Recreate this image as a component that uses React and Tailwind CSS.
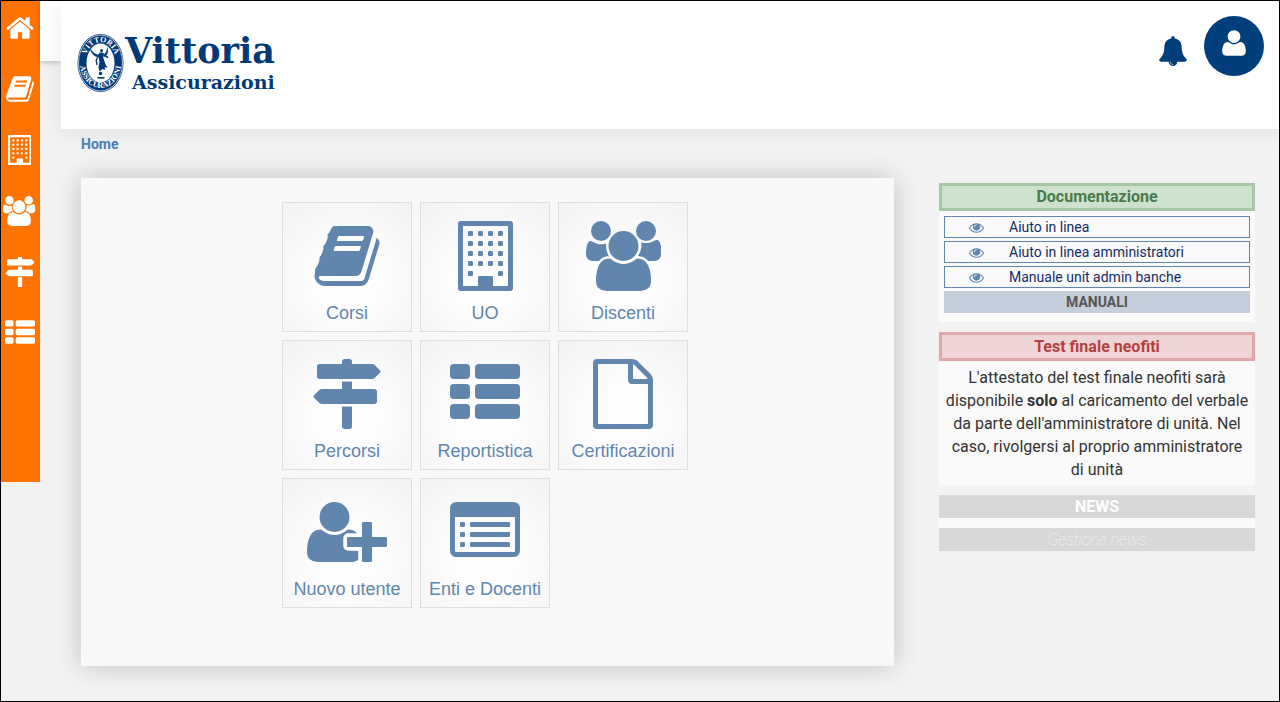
const ICONS = {
  home: {
    width: 1792,
    d: "M1472 992v480q0 26-19 45t-45 19h-384v-384h-256v384h-384q-26 0-45-19t-19-45v-480q0-1 .5-3t.5-3l575-474 575 474q1 2 1 6zm223-69l-62 74q-8 9-21 11h-3q-13 0-21-7l-692-577-692 577q-12 8-24 7-13-2-21-11l-62-74q-8-10-7-23.5t11-21.5l719-599q32-26 76-26t76 26l244 204v-195q0-14 9-23t23-9h192q14 0 23 9t9 23v408l219 182q10 8 11 21.5t-7 23.5z",
  },
  book: {
    width: 1792,
    d: "M1703 478q40 57 18 129l-275 906q-19 64-76.5 107.5t-122.5 43.5h-923q-77 0-148.5-53.5t-99.5-131.5q-24-67-2-127 0-4 3-27t4-37q1-8-3-21.5t-3-19.5q2-11 8-21t16.5-23.5 16.5-23.5q23-38 45-91.5t30-91.5q3-10 .5-30t-.5-28q3-11 17-28t17-23q21-36 42-92t25-90q1-9-2.5-32t.5-28q4-13 22-30.5t22-22.5q19-26 42.5-84.5t27.5-96.5q1-8-3-25.5t-2-26.5q2-8 9-18t18-23 17-21q8-12 16.5-30.5t15-35 16-36 19.5-32 26.5-23.5 36-11.5 47.5 5.5l-1 3q38-9 51-9h761q74 0 114 56t18 130l-274 906q-36 119-71.5 153.5t-128.5 34.5h-869q-27 0-38 15-11 16-1 43 24 70 144 70h923q29 0 56-15.5t35-41.5l300-987q7-22 5-57 38 15 59 43zm-1064 2q-4 13 2 22.5t20 9.5h608q13 0 25.5-9.5t16.5-22.5l21-64q4-13-2-22.5t-20-9.5h-608q-13 0-25.5 9.5t-16.5 22.5zm-83 256q-4 13 2 22.5t20 9.5h608q13 0 25.5-9.5t16.5-22.5l21-64q4-13-2-22.5t-20-9.5h-608q-13 0-25.5 9.5t-16.5 22.5z",
  },
  users: {
    width: 1920,
    d: "M593 896q-162 5-265 128h-134q-82 0-138-40.5t-56-118.5q0-353 124-353 6 0 43.5 21t97.5 42.5 119 21.5q67 0 133-23-5 37-5 66 0 159 93 287zm1071 637q0 120-73 189.5t-194 69.5h-874q-121 0-194-69.5t-73-189.5q0-53 3.5-103.5t14-109 26.5-108.5 43-97.5 62-81 85.5-53.5 111.5-20q10 0 43 21.5t73 48 107 48 135 21.5 135-21.5 107-48 73-48 43-21.5q61 0 111.5 20t85.5 53.5 62 81 43 97.5 26.5 108.5 14 109 3.5 103.5zm-1024-1277q0 106-75 181t-181 75-181-75-75-181 75-181 181-75 181 75 75 181zm704 384q0 159-112.5 271.5t-271.5 112.5-271.5-112.5-112.5-271.5 112.5-271.5 271.5-112.5 271.5 112.5 112.5 271.5zm576 225q0 78-56 118.5t-138 40.5h-134q-103-123-265-128 93-128 93-287 0-29-5-66 66 23 133 23 59 0 119-21.5t97.5-42.5 43.5-21q124 0 124 353zm-128-609q0 106-75 181t-181 75-181-75-75-181 75-181 181-75 181 75 75 181z",
  },
  signs: {
    width: 1792,
    d: "M1745 297q10 10 10 23t-10 23l-141 141q-28 28-68 28h-1344q-26 0-45-19t-19-45v-256q0-26 19-45t45-19h576v-64q0-26 19-45t45-19h128q26 0 45 19t19 45v64h512q40 0 68 28zm-977 919h256v512q0 26-19 45t-45 19h-128q-26 0-45-19t-19-45v-512zm832-448q26 0 45 19t19 45v256q0 26-19 45t-45 19h-1344q-40 0-68-28l-141-141q-10-10-10-23t10-23l141-141q28-28 68-28h512v-192h256v192h576z",
  },
  file: {
    width: 1536,
    d: "M1468 380q28 28 48 76t20 88v1152q0 40-28 68t-68 28h-1344q-40 0-68-28t-28-68v-1600q0-40 28-68t68-28h896q40 0 88 20t76 48zm-444-244v376h376q-10-29-22-41l-313-313q-12-12-41-22zm384 1528v-1024h-416q-40 0-68-28t-28-68v-416h-768v1536h1280z",
  },
  userPlus: {
    width: 2048,
    d: "M704 896q-159 0-271.5-112.5t-112.5-271.5 112.5-271.5 271.5-112.5 271.5 112.5 112.5 271.5-112.5 271.5-271.5 112.5zm960 128h352q13 0 22.5 9.5t9.5 22.5v192q0 13-9.5 22.5t-22.5 9.5h-352v352q0 13-9.5 22.5t-22.5 9.5h-192q-13 0-22.5-9.5t-9.5-22.5v-352h-352q-13 0-22.5-9.5t-9.5-22.5v-192q0-13 9.5-22.5t22.5-9.5h352v-352q0-13 9.5-22.5t22.5-9.5h192q13 0 22.5 9.5t9.5 22.5v352zm-736 224q0 52 38 90t90 38h256v238q-68 50-171 50h-874q-121 0-194-69t-73-190q0-53 3.5-103.5t14-109 26.5-108.5 43-97.5 62-81 85.5-53.5 111.5-20q19 0 39 17 79 61 154.5 91.5t164.5 30.5 164.5-30.5 154.5-91.5q20-17 39-17 132 0 217 96h-223q-52 0-90 38t-38 90v192z",
  },
  bell: {
    width: 1792,
    d: "M912 1696q0-16-16-16-59 0-101.5-42.5t-42.5-101.5q0-16-16-16t-16 16q0 73 51.5 124.5t124.5 51.5q16 0 16-16zm816-288q0 52-38 90t-90 38h-448q0 106-75 181t-181 75-181-75-75-181h-448q-52 0-90-38t-38-90q50-42 91-88t85-119.5 74.5-158.5 50-206 19.5-260q0-152 117-282.5t307-158.5q-8-19-8-39 0-40 28-68t68-28 68 28 28 68q0 20-8 39 190 28 307 158.5t117 282.5q0 139 19.5 260t50 206 74.5 158.5 85 119.5 91 88z",
  },
  user: {
    width: 1792,
    d: "M1600 1405q0 120-73 189.5t-194 69.5h-874q-121 0-194-69.5t-73-189.5q0-53 3.5-103.5t14-109 26.5-108.5 43-97.5 62-81 85.5-53.5 111.5-20q9 0 42 21.5t74.5 48 108 48 133.5 21.5 133.5-21.5 108-48 74.5-48 42-21.5q61 0 111.5 20t85.5 53.5 62 81 43 97.5 26.5 108.5 14 109 3.5 103.5zm-320-893q0 159-112.5 271.5t-271.5 112.5-271.5-112.5-112.5-271.5 112.5-271.5 271.5-112.5 271.5 112.5 112.5 271.5z",
  },
  eye: {
    width: 1792,
    d: "M1664 960q-152-236-381-353 61 104 61 225 0 185-131.5 316.5t-316.5 131.5-316.5-131.5-131.5-316.5q0-121 61-225-229 117-381 353 133 205 333.5 326.5t434.5 121.5 434.5-121.5 333.5-326.5zm-720-384q0-20-14-34t-34-14q-125 0-214.5 89.5t-89.5 214.5q0 20 14 34t34 14 34-14 14-34q0-86 61-147t147-61q20 0 34-14t14-34zm848 384q0 34-20 69-140 230-376.5 368.5t-499.5 138.5-499.5-139-376.5-368q-20-35-20-69t20-69q140-229 376.5-368t499.5-139 499.5 139 376.5 368q20 35 20 69z",
  },
};

const buildingWindows = [256, 512, 768, 1024, 1280].flatMap((y) =>
  [256, 512, 768, 1024]
    .filter((x) => y < 1280 || x === 256 || x === 1024)
    .map((x) => ({ x, y })),
);

function Icon({ name, className }) {
  if (name === "building") {
    return (
      <svg viewBox="0 0 1408 1792" fill="currentColor" className={className} aria-hidden="true">
        <path
          fillRule="evenodd"
          d="M64 0h1280q26 0 45 19t19 45v1664q0 26-19 45t-45 19H64q-26 0-45-19t-19-45V64q0-26 19-45T64 0zM128 128v1536h384v-224q0-13 9.500-22.500t22.500-9.500h320q13 0 22.500 9.500t9.500 22.500v224h384V128z"
        />
        {buildingWindows.map(({ x, y }) => (
          <rect key={`${x}-${y}`} x={x} y={y} width="128" height="128" rx="32" />
        ))}
      </svg>
    );
  }

  if (name === "list") {
    return (
      <svg viewBox="0 0 1792 1792" fill="currentColor" className={className} aria-hidden="true">
        {[128, 640, 1152].map((y) => (
          <g key={y}>
            <rect x="0" y={y} width="512" height="384" rx="96" />
            <rect x="640" y={y} width="1152" height="384" rx="96" />
          </g>
        ))}
      </svg>
    );
  }

  if (name === "listAlt") {
    return (
      <svg viewBox="0 0 1792 1792" fill="currentColor" className={className} aria-hidden="true">
        <path
          fillRule="evenodd"
          d="M160 128h1472q66 0 113 47t47 113v1088q0 66-47 113t-113 47H160q-66 0-113-47T0 1376V288q0-66 47-113t113-47zM128 512v864q0 13 9.500 22.500t22.500 9.500h1472q13 0 22.500-9.500t9.500-22.500V512z"
        />
        {[640, 896, 1152].map((y) => (
          <g key={y}>
            <rect x="256" y={y} width="128" height="128" rx="32" />
            <rect x="512" y={y} width="1024" height="128" rx="32" />
          </g>
        ))}
      </svg>
    );
  }

  const icon = ICONS[name];
  return (
    <svg
      viewBox={`0 0 ${icon.width} 1792`}
      fill="currentColor"
      className={className}
      aria-hidden="true"
    >
      <path d={icon.d} />
    </svg>
  );
}

const menuItems = [
  { label: "Home", icon: "home" },
  { label: "Corsi", icon: "book" },
  { label: "UO", icon: "building" },
  { label: "Discenti", icon: "users" },
  { label: "Percorsi", icon: "signs" },
  { label: "Reportistica", icon: "list" },
];

const tiles = [
  { label: "Corsi", icon: "book" },
  { label: "UO", icon: "building" },
  { label: "Discenti", icon: "users" },
  { label: "Percorsi", icon: "signs" },
  { label: "Reportistica", icon: "list" },
  { label: "Certificazioni", icon: "file" },
  { label: "Nuovo utente", icon: "userPlus" },
  { label: "Enti e Docenti", icon: "listAlt" },
];

const documents = [
  "Aiuto in linea",
  "Aiuto in linea amministratori",
  "Manuale unit admin banche",
];

function Logo() {
  return (
    <svg
      viewBox="0 0 212 60"
      className="h-[60px] w-[212px]"
      role="img"
      aria-label="Vittoria Assicurazioni"
    >
      <defs>
        <path id="seal-top" d="M8 30A15.500 21 0 0 1 39 30" />
        <path id="seal-bottom" d="M2.500 28A21 27 0 0 0 44.500 28" />
      </defs>
      <ellipse cx="23.500" cy="30" rx="23" ry="29" fill="#003a78" />
      <ellipse cx="23.500" cy="30" rx="22" ry="28" fill="none" stroke="#fff" strokeWidth="0.700" />
      <ellipse cx="23.500" cy="30" rx="14" ry="19.500" fill="#fff" />
      <g fill="#fff" fontFamily="'Liberation Serif', serif" fontWeight="700" textAnchor="middle">
        <text fontSize="8">
          <textPath href="#seal-top" startOffset="50%">VITTORIA</textPath>
        </text>
        <text fontSize="8">
          <textPath href="#seal-bottom" startOffset="50%">ASSICURAZIONI</textPath>
        </text>
      </g>
      {/* winged victory */}
      <g fill="#003a78">
        <circle cx="24.500" cy="17.500" r="1.500" />
        <path d="M23 22c-4 0-8-3-10.500-8 1 5 3 8 6 9.500l4 1zM26 22c3-2 4-4 4-8 2 4 1 8-3 10z" />
        <path d="M22.500 19.500h3.500l.5 6 2.500 7 1.500 2-3 0 1 2.500-3-1-3 2.500-1-4 1-6-1-5z" />
        <path d="M26 20l5.500 4-.7 1.200-5-3zM22.500 21l-2.500 6 .5 5-1.200.3-.8-5.300 3-6z" />
        <circle cx="23.500" cy="40.500" r="1.800" />
        <path d="M20.500 44h7v1.600h-7z" />
      </g>
      <g fill="#003a78" fontFamily="'DejaVu Serif', serif" fontWeight="700">
        <text x="48" y="30" fontSize="35">Vittoria</text>
        <text x="55" y="56" fontSize="19">Assicurazioni</text>
      </g>
    </svg>
  );
}

function Tile({ label, icon }) {
  return (
    <a
      href="#"
      className="flex h-[130px] flex-col items-center border border-[#dddddd] bg-[radial-gradient(circle_at_50%_60%,#ffffff_0%,#fdfdfd_35%,#f2f2f2_100%)] pt-[18px] text-[#6186ae]"
    >
      <Icon name={icon} className="h-[70px] w-auto" />
      <span className="mt-2 font-['Liberation_Sans',sans-serif] text-lg leading-7 whitespace-nowrap">
        {label}
      </span>
    </a>
  );
}

export default function App() {
  return (
    <div className="flex min-h-screen items-start border border-black bg-[#f2f2f2] font-['Roboto',sans-serif] text-[#333333]">
      <nav aria-label="Menu" className="flex w-[39px] shrink-0 flex-col items-center gap-[31px] bg-[#ff7400] pt-3 pr-[2px] pb-[134px] text-white">
        {menuItems.map((item) => (
          <a key={item.label} href="#" aria-label={item.label}>
            <Icon name={item.icon} className="h-[30px] w-auto max-w-none" />
          </a>
        ))}
      </nav>
      <div className="h-[60px] w-[21px] shrink-0 bg-white shadow-[0_2px_5px_rgba(0,0,0,0.2)]" />

      <div className="relative min-w-0 flex-1">
        <header className="flex items-start justify-between bg-white pt-[15px] pr-[15px] pb-9 pl-4 shadow-[0_4px_20px_rgba(0,0,0,0.08)]">
          <a href="#" className="mt-[17px]">
            <Logo />
          </a>
          <div className="flex items-start gap-4 text-[#003e7c]">
            <button type="button" aria-label="Notifiche" className="mt-5">
              <Icon name="bell" className="size-[30px]" />
            </button>
            <button
              type="button"
              aria-label="Profilo"
              className="flex size-[60px] justify-center rounded-full bg-[#003e7c] pt-3 text-white"
            >
              <Icon name="user" className="size-[30px]" />
            </button>
          </div>
        </header>

        <div className="px-5 pt-[5px] text-sm leading-5 font-bold">
          <a href="#" className="text-[#4682b4]">Home</a>
        </div>

        <div className="flex items-start gap-[45px] pt-6 pr-6 pb-[35px] pl-5">
          <main className="min-w-0 flex-1 bg-[#f8f8f8] pt-6 pr-[5px] pb-[58px] shadow-[0_0_25px_rgba(0,0,0,0.2)]">
            <div className="mx-auto grid w-fit grid-cols-[130px_130px_130px] gap-2">
              {tiles.map((tile) => (
                <Tile key={tile.label} {...tile} />
              ))}
            </div>
          </main>

          <aside className="mt-[5px] flex w-[316px] shrink-0 flex-col gap-[10px] text-center">
            <section className="bg-[#fafafa]">
              <h2 className="border-3 border-[#a5c7a5] bg-[#cce2cc] leading-[22px] font-bold text-[#4b7b4b]">
                Documentazione
              </h2>
              <div className="flex flex-col gap-[3px] px-[5px] pt-[5px] pb-[9px] text-sm leading-5">
                {documents.map((doc) => (
                  <a
                    key={doc}
                    href="#"
                    className="flex items-center border border-[#6186ae] pl-6 text-left text-[#142c64]"
                  >
                    <Icon name="eye" className="mr-[25px] size-[15px] text-[#6186ae]" />
                    {doc}
                  </a>
                ))}
                <button type="button" className="bg-[#c3ceda] leading-[22px] font-bold text-[#555555]">
                  MANUALI
                </button>
              </div>
            </section>

            <section className="bg-[#fafafa]">
              <h2 className="border-3 border-[#dfa7a7] bg-[#eed5d5] leading-[23px] font-bold text-[#b44141]">
                Test finale neofiti
              </h2>
              <p className="px-[5px] pt-[5px] pb-1 leading-[23px]">
                L'attestato del test finale neofiti sarà disponibile <strong>solo</strong> al
                caricamento del verbale da parte dell'amministratore di unità. Nel caso, rivolgersi
                al proprio amministratore di unità
              </p>
            </section>

            <section className="flex flex-col gap-[10px] bg-[#fafafa]">
              <h2 className="bg-[#d8d8d8] leading-[23px] font-bold text-white">NEWS</h2>
              <a href="#" className="bg-[#d8d8d8] leading-[23px] font-thin text-[#f4f4f4] italic">
                Gestione news
              </a>
            </section>
          </aside>
        </div>
      </div>
    </div>
  );
}
